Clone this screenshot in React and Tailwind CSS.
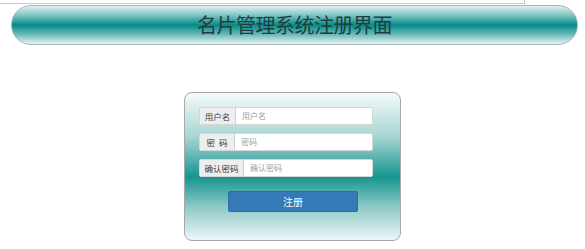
export default function App() {
  const rows = [
    { label: "用户名", placeholder: "用户名", w: "w-[36px]" },
    { label: "密\u00a0\u00a0码", placeholder: "密码", w: "w-[35px]" },
    { label: "确认密码", placeholder: "确认密码", w: "w-[44px]" },
  ];

  return (
    <div
      className="w-[585px] h-[249px] overflow-hidden bg-white"
      style={{ fontFamily: '"Noto Sans CJK SC", "Liberation Sans", sans-serif' }}
    >
      {/* clipped edge of the address bar above */}
      <div className="h-[4px] w-[525px] border-b border-r border-[#c8c8c8]" />

      {/* title bar */}
      <div className="ml-[11px] mt-[1px] w-[567px] h-[40px] rounded-full border border-[#a9b4b4] bg-[linear-gradient(to_bottom,#e2f1f1_0%,#7cc3c1_25%,#038b88_50%,#6cbab8_75%,#e9f5f5_100%)] flex items-center justify-center">
        <h1 className="text-[20px] leading-none text-[#223d3d] tracking-[-0.5px]">名片管理系统注册界面</h1>
      </div>

      {/* register form */}
      <div className="ml-[184px] mt-[47px] w-[217px] h-[149px] rounded-[8px] border border-[#a8a8a8] bg-[linear-gradient(to_bottom,#f4fafa_0%,#a6d5d3_30%,#16958f_57%,#8fcbc8_78%,#eef7f7_100%)] pt-[14px] pl-[14px]">
        <div className="flex flex-col gap-[8px]">
          {rows.map((r) => (
            <div key={r.placeholder} className="flex h-[18px] w-[174px] rounded-[2px] overflow-hidden border border-[#d6d6d6] bg-white">
              <span className={`${r.w} shrink-0 bg-[#eeeeee] border-r border-[#d0d0d0] flex items-center justify-center text-[8.5px] text-[#3c3c3c]`}>
                {r.label}
              </span>
              <span className="flex-1 flex items-center pl-[6px] text-[8px] text-[#a0a0a0]">{r.placeholder}</span>
            </div>
          ))}
        </div>
        <button className="mt-[14px] ml-[29px] w-[130px] h-[21px] rounded-[2px] bg-[#337ab7] border border-[#2e6da4] text-white text-[10px] flex items-center justify-center">
          注册
        </button>
      </div>
    </div>
  );
}
